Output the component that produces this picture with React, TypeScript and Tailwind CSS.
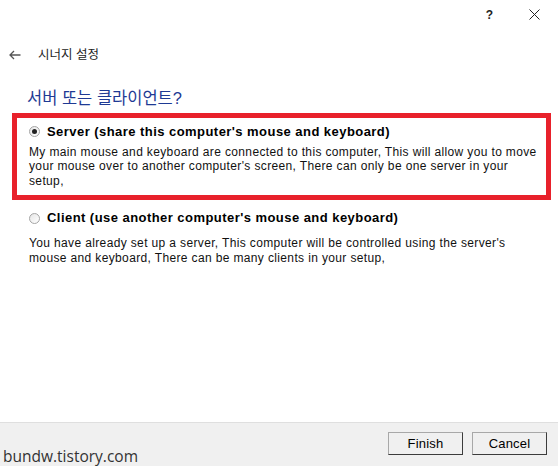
const sans = { fontFamily: '"Liberation Sans", "Noto Sans CJK KR", sans-serif' };

const Radio = ({ checked }: { checked: boolean }) => (
  <span className="inline-flex h-[11px] w-[11px] shrink-0 items-center justify-center rounded-full border border-[#a5a5a5] bg-gradient-to-br from-[#e6e6e6] to-white">
    {checked && <span className="h-[5px] w-[5px] rounded-full bg-[#222]" />}
  </span>
);

const Option = ({
  checked,
  title,
  lines,
  gap,
}: {
  checked: boolean;
  title: string;
  lines: string[];
  gap: string;
}) => (
  <div className="flex flex-col">
    <div className="flex items-center gap-[7px]">
      <Radio checked={checked} />
      <span className="whitespace-nowrap text-[13px] font-bold leading-[16px] tracking-[0.45px] text-black">
        {title}
      </span>
    </div>
    <div className={gap}>
      {lines.map((line) => (
        <p
          key={line}
          className="whitespace-nowrap text-[12px] leading-[14.5px] tracking-[0.36px] text-[#111]"
        >
          {line}
        </p>
      ))}
    </div>
  </div>
);

export default function App() {
  return (
    <div
      className="flex h-[466px] w-[558px] flex-col overflow-hidden bg-white"
      style={sans}
    >
      {/* Title bar */}
      <div className="flex h-[30px] items-center justify-end gap-[36px] pr-[18px] text-[#222]">
        <span className="text-[12px] font-bold">?</span>
        <svg width="11" height="11" viewBox="0 0 11 11" className="mb-[1px]">
          <path d="M0.5 0.5 L10.5 10.5 M10.5 0.5 L0.5 10.5" stroke="#222" strokeWidth="1" />
        </svg>
      </div>

      {/* Header */}
      <div className="mt-[16px] flex items-center gap-[17px] pl-[9px] text-[#222]">
        <svg width="12" height="10" viewBox="0 0 12 10">
          <path d="M5 1 L1 5 L5 9 M1 5 H11.5" stroke="#555" strokeWidth="1.3" fill="none" />
        </svg>
        <span className="text-[12.5px]">시너지 설정</span>
      </div>

      <h1 className="mt-[23px] pl-[27px] text-[16.5px] leading-[20px] text-[#1e3a94]">
        서버 또는 클라이언트?
      </h1>

      <div className="mt-[5px] ml-[12px] w-[539px] border-[5px] border-[#e8212b] pl-[12px] pr-[8px] pt-[6px] pb-[7px]">
        <Option
          checked
          gap="mt-[5px]"
          title="Server (share this computer's mouse and keyboard)"
          lines={[
            "My main mouse and keyboard are connected to this computer, This will allow you to move",
            "your mouse over to another computer's screen, There can only be one server in your",
            "setup,",
          ]}
        />
      </div>

      <div className="mt-[10px] pl-[29px] pr-[20px]">
        <Option
          checked={false}
          gap="mt-[10px]"
          title="Client (use another computer's mouse and keyboard)"
          lines={[
            "You have already set up a server, This computer will be controlled using the server's",
            "mouse and keyboard, There can be many clients in your setup,",
          ]}
        />
      </div>

      <div className="flex-1" />

      {/* Footer */}
      <div className="relative h-[44px] border-t border-[#dfdfdf] bg-[#f0f0f0]">
        <div className="flex justify-end gap-[9px] pr-[11px] pt-[9px]">
          {["Finish", "Cancel"].map((label) => (
            <button
              key={label}
              className="h-[23px] w-[75px] border border-[#a8a8a8] border-r-[#3c3c3c] border-b-[#3c3c3c] bg-[#f0f0f0] text-[13px] tracking-[0.2px] text-black"
            >
              {label}
            </button>
          ))}
        </div>
        <span
          className="absolute left-[3px] bottom-[-2px] text-[15.5px] text-[#333]"
          style={{ fontFamily: '"Open Sans", sans-serif' }}
        >
          bundw.tistory.com
        </span>
      </div>
    </div>
  );
}
